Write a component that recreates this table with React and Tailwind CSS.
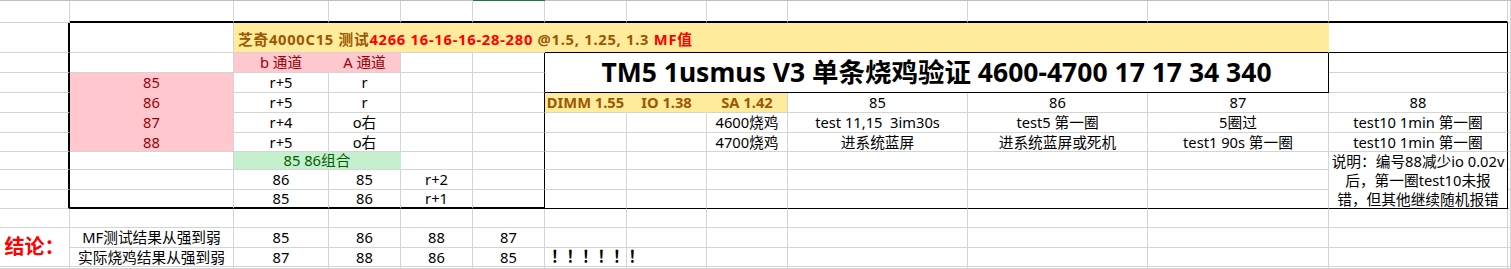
import React from "react";
import { twMerge } from "tailwind-merge";

const Cell = ({ className = "", children }) => (
  <div
    className={twMerge(
      "flex items-center justify-center whitespace-nowrap border-r border-b border-[#d4d4d4] text-black",
      className
    )}
  >
    {children}
  </div>
);

// plain empty gridline cells
const Blank = ({ n, className = "" }) =>
  Array.from({ length: n }, (_, i) => <Cell key={i} className={className} />);

const leftEdge = "border-r-2 border-r-black";
const pink = "bg-[#ffc7ce] text-[#9c0006]";
const yellow = "bg-[#ffeb9c] text-[#9c5700] font-bold";

export default function App() {
  return (
    <div className="h-[269px] w-[1511px] overflow-hidden bg-white font-['Noto_Sans','Noto_Sans_CJK_SC',sans-serif] text-[14.7px]">
      <div className="grid h-full grid-cols-[70px_164px_95px_72px_72px_72px_82px_80px_81px_180px_180px_181px_179px_1fr] grid-rows-[1px_22px_30px_20px_20px_20px_20px_19px_18px_20px_19px_19px_20px_19px_1fr]">
        {/* header edge */}
        <div className="col-span-5 bg-[#bfbfbf]" />
        <div className="bg-[#217346]" />
        <div className="col-span-8 bg-[#bfbfbf]" />

        {/* row 1 */}
        <Cell />
        <Blank n={12} className="border-b-2 border-b-black" />
        <Cell />

        {/* row 2 */}
        <Cell className={leftEdge} />
        <Cell />
        <Cell className={twMerge("col-span-4 justify-start pl-[4px] pt-[3px] border-r-[#ffeb9c]", yellow)}>
          <span className="relative tracking-[0.75px]">
            芝奇4000C15 测试<span className="text-[#ff0000]">4266 16-16-16-28-280</span> @1.5, 1.25, 1.3{" "}
            <span className="text-[#ff0000]">MF值</span>
          </span>
        </Cell>
        <Cell className="col-span-6 bg-[#ffeb9c] border-b-black border-r-[#ffeb9c]" />
        <Cell className="border-b-black border-r-black" />
        <Cell />

        {/* row 3 */}
        <Cell className={leftEdge} />
        <Cell />
        <Cell className={twMerge(pink, "border-r-[#ffc7ce]")}>b 通道</Cell>
        <Cell className={pink}>A 通道</Cell>
        <Cell />
        <Cell className="border-r-black" />
        <Cell className="col-span-6 row-span-2 border-r-black border-b-black text-[26.5px] font-bold">
          TM5 1usmus V3 单条烧鸡验证 4600-4700 17 17 34 340
        </Cell>
        <Cell className="border-r-black" />
        <Cell />

        {/* row 4 */}
        <Cell className={leftEdge} />
        <Cell className={twMerge(pink, "border-b-[#ffc7ce]")}>85</Cell>
        <Cell>r+5</Cell>
        <Cell>r</Cell>
        <Cell />
        <Cell className="border-r-black" />
        <Cell className="border-r-black" />
        <Cell />

        {/* row 5 */}
        <Cell className={leftEdge} />
        <Cell className={twMerge(pink, "border-b-[#ffc7ce]")}>86</Cell>
        <Cell>r+5</Cell>
        <Cell>r</Cell>
        <Cell />
        <Cell className="border-r-black" />
        <Cell className={twMerge(yellow, "border-r-[#ffeb9c]")}>DIMM 1.55</Cell>
        <Cell className={twMerge(yellow, "border-r-[#ffeb9c]")}>IO 1.38</Cell>
        <Cell className={yellow}>SA 1.42</Cell>
        <Cell>85</Cell>
        <Cell>86</Cell>
        <Cell>87</Cell>
        <Cell className="border-r-black">88</Cell>
        <Cell />

        {/* row 6 */}
        <Cell className={leftEdge} />
        <Cell className={twMerge(pink, "border-b-[#ffc7ce]")}>87</Cell>
        <Cell>r+4</Cell>
        <Cell>o右</Cell>
        <Cell />
        <Cell className="border-r-black" />
        <Cell />
        <Cell />
        <Cell>4600烧鸡</Cell>
        <Cell className="whitespace-pre">test 11,15  3im30s</Cell>
        <Cell>test5 第一圈</Cell>
        <Cell>5圈过</Cell>
        <Cell className="border-r-black">test10 1min 第一圈</Cell>
        <Cell />

        {/* row 7 */}
        <Cell className={leftEdge} />
        <Cell className={pink}>88</Cell>
        <Cell>r+5</Cell>
        <Cell>o右</Cell>
        <Cell />
        <Cell className="border-r-black" />
        <Cell />
        <Cell />
        <Cell>4700烧鸡</Cell>
        <Cell>进系统蓝屏</Cell>
        <Cell>进系统蓝屏或死机</Cell>
        <Cell>test1 90s 第一圈</Cell>
        <Cell className="border-r-black">test10 1min 第一圈</Cell>
        <Cell />

        {/* row 8 */}
        <Cell className={leftEdge} />
        <Cell />
        <Cell className="col-span-2 bg-[#c6efce] text-[#006100] border-[#c6efce] border-b-[#d4d4d4]">85 86组合</Cell>
        <Cell />
        <Cell className="border-r-black" />
        <Blank n={6} />
        <Cell className="row-span-3 border-r-black border-b-black whitespace-normal text-center leading-[19px]">
          <div>
            说明：编号88减少io 0.02v
            <br />
            后，第一圈test10未报
            <br />
            错，但其他继续随机报错
          </div>
        </Cell>
        <Cell />

        {/* row 9 */}
        <Cell className={leftEdge} />
        <Cell />
        <Cell>86</Cell>
        <Cell>85</Cell>
        <Cell>r+2</Cell>
        <Cell className="border-r-black" />
        <Blank n={6} />
        <Cell />

        {/* row 10 */}
        <Cell className={leftEdge} />
        <Cell className="border-b-2 border-b-black" />
        <Cell className="border-b-2 border-b-black">85</Cell>
        <Cell className="border-b-2 border-b-black">86</Cell>
        <Cell className="border-b-2 border-b-black">r+1</Cell>
        <Cell className="border-b-2 border-b-black border-r-black" />
        <Blank n={6} className="border-b-black" />
        <Cell />

        {/* row 11 */}
        <Blank n={14} />

        {/* row 12 */}
        <Cell className="row-span-2 text-[20px] font-bold text-[#ff0000]">结论：</Cell>
        <Cell>MF测试结果从强到弱</Cell>
        <Cell>85</Cell>
        <Cell>86</Cell>
        <Cell>88</Cell>
        <Cell>87</Cell>
        <Blank n={8} />

        {/* row 13 */}
        <Cell>实际烧鸡结果从强到弱</Cell>
        <Cell>87</Cell>
        <Cell>88</Cell>
        <Cell>86</Cell>
        <Cell>85</Cell>
        <Cell className="justify-start pl-[6px] text-[15.5px] font-bold">
          <span className="relative">！！！！！！</span>
        </Cell>
        <Blank n={7} />

        {/* row 14 */}
        <Blank n={14} />
      </div>
    </div>
  );
}
